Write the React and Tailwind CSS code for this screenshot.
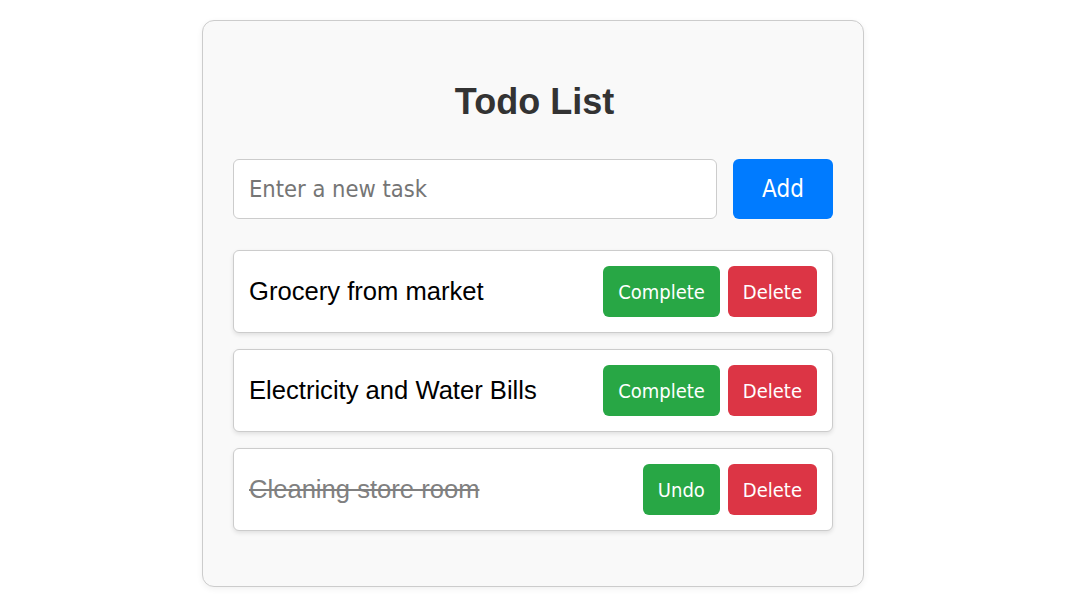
import React, { useState } from 'react';

const App = () => {
  const [todos, setTodos] = useState([
    { id: 1, text: 'Grocery from market', done: false },
    { id: 2, text: 'Electricity and Water Bills', done: false },
    { id: 3, text: 'Cleaning store room', done: true },
  ]);
  const [input, setInput] = useState('');

  const addTodo = () => {
    if (!input.trim()) return;
    setTodos([...todos, { id: Date.now(), text: input, done: false }]);
    setInput('');
  };

  const toggle = (id) =>
    setTodos(todos.map((t) => (t.id === id ? { ...t, done: !t.done } : t)));

  const remove = (id) => setTodos(todos.filter((t) => t.id !== id));

  const ui = "font-['DejaVu_Sans_Condensed','DejaVu_Sans',sans-serif] font-stretch-condensed";

  return (
    <div className="min-h-screen bg-white flex justify-center pt-5 pr-[3px] font-['Liberation_Sans',Arial,sans-serif]">
      <div className="w-[662px] h-[567px] bg-[#f9f9f9] border border-[#cccccc] rounded-xl shadow-[0_2px_6px_rgba(0,0,0,0.06)] px-[30px] pt-[60px]">
        <h1 className="text-[36px] leading-[41px] font-bold text-[#333333] text-center pl-[3px]">Todo List</h1>

        <div className="flex gap-4 mt-[37px]">
          <input
            value={input}
            onChange={(e) => setInput(e.target.value)}
            onKeyDown={(e) => e.key === 'Enter' && addTodo()}
            placeholder="Enter a new task"
            className={`${ui} flex-1 h-[60px] bg-white border border-[#cccccc] rounded-md px-[15px] text-[23.5px] text-[#333] placeholder-[#757575] outline-none`}
          />
          <button
            onClick={addTodo}
            className={`${ui} w-[100px] h-[60px] bg-[#007bff] text-white rounded-md text-[24px]`}
          >
            Add
          </button>
        </div>

        <div className="mt-[31px] flex flex-col gap-4">
          {todos.map((todo) => (
            <div
              key={todo.id}
              className="flex items-center justify-between bg-white border border-[#cccccc] rounded-md p-[15px] shadow-[0_2px_4px_rgba(0,0,0,0.1)]"
            >
              <span
                className={`text-[25.6px] ${
                  todo.done ? 'line-through text-[#808080]' : 'text-black'
                }`}
              >
                {todo.text}
              </span>
              <div className="flex gap-2">
                <button
                  onClick={() => toggle(todo.id)}
                  className={`${ui} h-[51px] px-[15px] bg-[#28a745] text-white rounded-md text-[20px]`}
                >
                  {todo.done ? 'Undo' : 'Complete'}
                </button>
                <button
                  onClick={() => remove(todo.id)}
                  className={`${ui} h-[51px] px-[15px] bg-[#dc3545] text-white rounded-md text-[20px]`}
                >
                  Delete
                </button>
              </div>
            </div>
          ))}
        </div>
      </div>
    </div>
  );
};

export default App;
